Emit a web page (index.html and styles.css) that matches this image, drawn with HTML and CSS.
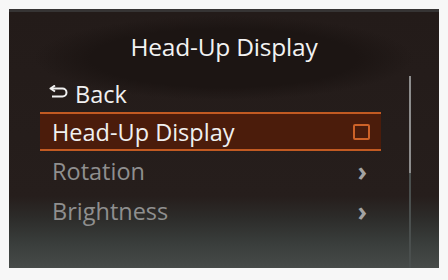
FILE: index.html
```
<!doctype html>
<html lang="en">
<head>
    <meta charset="UTF-8">
    <title>Head-Up Display</title>
    <link rel="stylesheet" href="styles.css">
</head>
<body>
<div class="screen">
    <div class="screenTitle">Head-Up Display</div>
    <div class="menuArea">
        <div class="menuList">
            <div class="menuItem back">
                <svg class="backIcon" width="20" height="13" viewBox="0 0 20 13">
                    <path d="M2 3.5 H13.5 A4 4 0 0 1 13.5 11.5 H3" fill="none" stroke="#f0f0f0" stroke-width="2"/>
                    <path d="M6 0.5 L1.5 3.5 L6 6.5" fill="none" stroke="#f0f0f0" stroke-width="2" stroke-linejoin="round"/>
                </svg>
                <span>Back</span>
            </div>
            <div class="menuItem selected">
                <span>Head-Up Display</span>
                <span class="checkBox"></span>
            </div>
            <div class="menuItem dim">
                <span>Rotation</span>
                <span class="chevron">&#8250;</span>
            </div>
            <div class="menuItem dim">
                <span>Brightness</span>
                <span class="chevron">&#8250;</span>
            </div>
        </div>
        <div class="scrollTrack">
            <div class="scrollThumb"></div>
        </div>
    </div>
</div>
</body>
</html>
```
FILE: styles.css
```
body {
    margin: 0;
    background: #f7f7f7;
    font-family: "Open Sans", sans-serif;
}

.screen {
    margin: 9px 0 0 9px;
    width: 430px;
    height: 259px;
    display: flex;
    flex-direction: column;
    border-top: 3px solid #363434;
    box-sizing: border-box;
    background:
        radial-gradient(ellipse 190px 42px at 215px 46px, #1c1513 0%, #1c1513 70%, transparent 100%),
        linear-gradient(to bottom, #231b19 0%, #261e1c 72%, #2c2b29 80%, #393d3b 90%, #474b49 100%);
    overflow: hidden;
}

.screenTitle {
    height: 60px;
    padding-top: 8px;
    box-sizing: border-box;
    display: flex;
    align-items: center;
    justify-content: center;
    color: #f2f2f2;
    font-size: 24.5px;
    letter-spacing: -0.2px;
}

.menuArea {
    flex: 1;
    display: flex;
}

.menuList {
    width: 341px;
    margin-left: 31px;
    padding-top: 3px;
}

.menuItem {
    height: 40px;
    display: flex;
    align-items: center;
    justify-content: space-between;
    padding: 0 12px 0 12px;
    font-size: 23.5px;
    color: #f0f0f0;
    box-sizing: border-box;
}

.menuItem.back {
    justify-content: flex-start;
    height: 37px;
    padding-left: 9px;
}

.backIcon {
    margin-right: 6px;
    margin-top: -4px;
}

.menuItem.selected {
    height: 39px;
    background: #4b1c0b;
    border-top: 2px solid #c25a22;
    border-bottom: 2px solid #c25a22;
}

.checkBox {
    width: 13px;
    height: 12px;
    border: 2px solid #cd6228;
    border-radius: 2px;
    margin-right: -1px;
}

.menuItem.dim {
    color: #8f8f8f;
}

.chevron {
    color: #a3a3a3;
    font-size: 26px;
    font-weight: bold;
    margin-right: 2px;
}

.scrollTrack {
    width: 2px;
    margin-left: 28px;
    margin-top: 4px;
    background: #4a4f4e;
}

.scrollThumb {
    height: 97px;
    background: #8d8d8d;
}
```
